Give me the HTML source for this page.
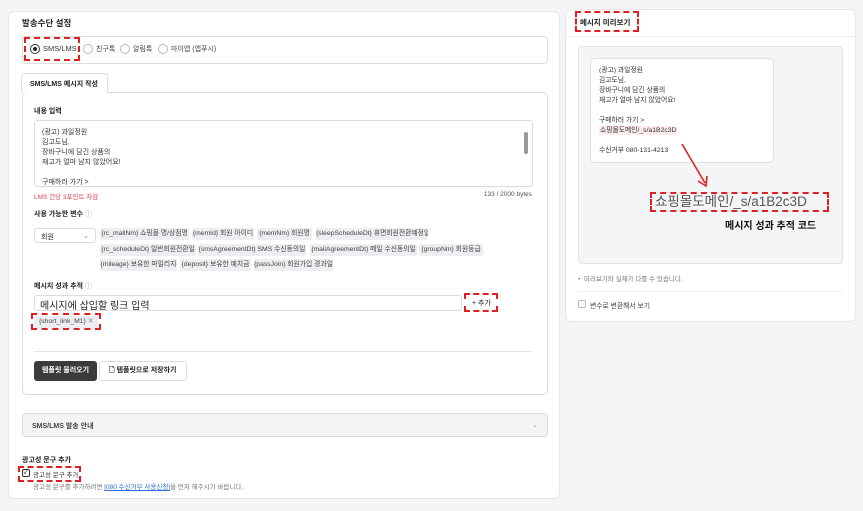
<!DOCTYPE html>
<html><head><meta charset="utf-8"><style>
*{box-sizing:border-box;margin:0;padding:0}
body{width:863px;height:511px;background:#f4f5f7;font-family:"Liberation Sans","Noto Sans CJK KR",sans-serif;color:#222;position:relative;overflow:hidden;font-size:8px}
.a{position:absolute}
.card{background:#fff;border:1px solid #e6e7ea;border-radius:6px}
.b{font-weight:bold}
.dash{border:2px dashed #e02020}
.chip{position:absolute;height:12px;background:#eceef1;border-radius:2px;font-size:6.8px;color:#444;line-height:12px;text-align:center;white-space:nowrap;overflow:hidden}
.radio{display:inline-block;width:10px;height:10px;border:1px solid #bbb;border-radius:50%;vertical-align:middle;margin-right:3px}
</style></head><body>
<div class="a card" style="left:8px;top:11px;width:552px;height:488px"></div>
<div class="a b" style="left:22px;top:17px;font-size:8.5px">발송수단 설정</div>
<div class="a" style="left:22px;top:36px;width:526px;height:28px;border:1px solid #ddd;border-radius:4px"></div>
<div class="a dash" style="left:24px;top:37px;width:56px;height:24px"></div>
<div class="a" style="left:30px;top:44px;font-size:7.5px;color:#333"><span class="radio" style="border-color:#333;position:relative"><span style="position:absolute;left:2px;top:2px;width:4px;height:4px;background:#222;border-radius:50%"></span></span>SMS/LMS</div>
<div class="a" style="left:83px;top:44px;font-size:7px;color:#444"><span class="radio"></span>친구톡</div>
<div class="a" style="left:120px;top:44px;font-size:7px;color:#444"><span class="radio"></span>알림톡</div>
<div class="a" style="left:158px;top:44px;font-size:7px;color:#444"><span class="radio"></span>마이앱 (앱푸시)</div>
<div class="a" style="left:22px;top:92px;width:526px;height:303px;border:1px solid #ddd;border-radius:5px"></div>
<div class="a b" style="left:21px;top:73px;width:87px;height:20px;border:1px solid #ddd;border-bottom:none;background:#fff;border-radius:4px 4px 0 0;font-size:7px;padding:5px 0 0 8px">SMS/LMS 메시지 작성</div>
<div class="a b" style="left:34px;top:106px;font-size:7px">내용 입력</div>
<div class="a" style="left:34px;top:120px;width:499px;height:67px;border:1px solid #ddd;border-radius:3px;font-size:7px;line-height:10px;padding:7px 7px;color:#333">(광고) 과일정원<br>김고도님,<br>장바구니에 담긴 상품의<br>재고가 얼마 남지 않았어요!<br><br>구매하러 가기 &gt;</div>
<div class="a" style="left:524px;top:132px;width:4px;height:22px;background:#999;border-radius:2px"></div>
<div class="a" style="left:34px;top:191px;font-size:6.5px;color:#e0404a">LMS 건당 3포인트 차감</div>
<div class="a" style="right:331px;top:191px;font-size:6.5px;color:#555">133 / 2000 bytes</div>
<div class="a b" style="left:34px;top:209px;font-size:7px">사용 가능한 변수 <span style="color:#aaa;font-weight:normal">ⓘ</span></div>
<div class="a" style="left:34px;top:228px;width:62px;height:15px;border:1px solid #ddd;border-radius:3px;font-size:7px;padding:3px 6px">회원<span style="float:right;color:#888">⌄</span></div>
<div class="chip" style="left:100px;top:228px;width:89px">{rc_mallNm} 쇼핑몰 명/상점명</div>
<div class="chip" style="left:192px;top:228px;width:62px">{memId} 회원 아이디</div>
<div class="chip" style="left:257px;top:228px;width:55px">{memNm} 회원명</div>
<div class="chip" style="left:316px;top:228px;width:112px">{sleepScheduleDt} 휴면회원전환예정일</div>
<div class="chip" style="left:100px;top:244px;width:96px">{rc_scheduleDt} 일반회원전환일</div>
<div class="chip" style="left:198px;top:244px;width:108px">{smsAgreementDt} SMS 수신동의일</div>
<div class="chip" style="left:310px;top:244px;width:107px">{mailAgreementDt} 메일 수신동의일</div>
<div class="chip" style="left:419px;top:244px;width:64px">{groupNm} 회원등급</div>
<div class="chip" style="left:100px;top:259px;width:77px">{mileage} 보유한 마일리지</div>
<div class="chip" style="left:180px;top:259px;width:71px">{deposit} 보유한 예치금</div>
<div class="chip" style="left:254px;top:259px;width:79px">{passJoin} 회원가입 경과일</div>
<div class="a b" style="left:34px;top:281px;font-size:7px">메시지 성과 추적 <span style="color:#aaa;font-weight:normal">ⓘ</span></div>
<div class="a" style="left:34px;top:295px;width:428px;height:16px;border:1px solid #ddd;border-radius:3px;font-size:10px;padding:1px 5px;color:#222">메시지에 삽입할 링크 입력</div>
<div class="a dash" style="left:464px;top:293px;width:34px;height:19px;font-size:7px;padding:3px 0 0 6px">+ 추가</div>
<div class="chip" style="left:34px;top:316px;width:64px;text-align:left;padding-left:5px">{short_link_M1} <span style="color:#888">✕</span></div>
<div class="a dash" style="left:31px;top:313px;width:70px;height:17px"></div>
<div class="a" style="left:34px;top:351px;width:498px;height:1px;background:#e5e5e5"></div>
<div class="a b" style="left:34px;top:361px;width:63px;height:20px;background:#3a3b3d;border-radius:3px;color:#fff;font-size:7px;text-align:center;line-height:20px">템플릿 불러오기</div>
<div class="a b" style="left:99px;top:361px;width:88px;height:20px;border:1px solid #ddd;border-radius:3px;font-size:7px;line-height:18px;padding-left:9px">🗋 템플릿으로 저장하기</div>
<div class="a b" style="left:22px;top:413px;width:526px;height:24px;background:#f3f4f6;border:1px solid #ddd;border-radius:4px;font-size:7px;color:#444;padding:7px 9px">SMS/LMS 발송 안내<span style="float:right;color:#999;font-weight:normal">⌄</span></div>
<div class="a b" style="left:22px;top:455px;font-size:7px">광고성 문구 추가</div>
<div class="a dash" style="left:18px;top:466px;width:63px;height:16px"></div>
<div class="a" style="left:22px;top:469px;width:8px;height:8px;border:1px solid #333;border-radius:2px;font-size:7px;line-height:6px;text-align:center">✓</div>
<div class="a" style="left:33px;top:469px;font-size:6.5px;color:#333">광고성 문구 추가</div>
<div class="a" style="left:33px;top:481px;font-size:6.5px;color:#777">광고성 문구를 추가하려면 <span style="color:#2a6ee0;text-decoration:underline">[080 수신거부 사용신청]</span>을 먼저 해주시기 바랍니다.</div>

<div class="a card" style="left:565px;top:9px;width:291px;height:313px"></div>
<div class="a" style="left:566px;top:36px;width:289px;height:1px;background:#eee"></div>
<div class="a dash b" style="left:575px;top:11px;width:64px;height:21px;font-size:7.5px;padding:4px 0 0 3px">메시지 미리보기</div>
<div class="a" style="left:578px;top:46px;width:265px;height:218px;background:#f4f5f7;border:1px solid #e2e3e6;border-radius:4px"></div>
<div class="a" style="left:590px;top:58px;width:184px;height:105px;background:#fff;border:1px solid #dfe0e3;border-radius:5px;font-size:6.8px;line-height:10px;padding:7px 8px;color:#333">(광고) 과일정원<br>김고도님,<br>장바구니에 담긴 상품의<br>재고가 얼마 남지 않았어요!<br><br>구매하러 가기 &gt;<br><span style="background:#fdeceb;padding:1px 1px">쇼핑몰도메인/_s/a1B2c3D</span><br><br>수신거부 080-131-4213</div>
<svg class="a" style="left:670px;top:140px" width="50" height="50"><line x1="12" y1="4" x2="35" y2="43" stroke="#e02020" stroke-width="1.6"/><polyline points="28,41 36,46 37,36" fill="none" stroke="#e02020" stroke-width="1.6"/></svg>
<div class="a dash" style="left:650px;top:192px;width:179px;height:20px;font-size:13.5px;color:#555;padding:0 0 0 3px;line-height:16px;white-space:nowrap;overflow:hidden">쇼핑몰도메인/_s/a1B2c3D</div>
<div class="a b" style="left:725px;top:217px;font-size:10px;color:#111">메시지 성과 추적 코드</div>
<div class="a" style="left:578px;top:273px;font-size:6.5px;color:#777">•&nbsp; 미리보기와 실제가 다를 수 있습니다.</div>
<div class="a" style="left:578px;top:291px;width:265px;height:1px;background:#eee"></div>
<div class="a" style="left:578px;top:300px;width:8px;height:8px;border:1px solid #bbb;border-radius:2px;background:#fff"></div>
<div class="a" style="left:590px;top:300px;font-size:6.8px;color:#444">변수로 변환해서 보기</div>
</body></html>
